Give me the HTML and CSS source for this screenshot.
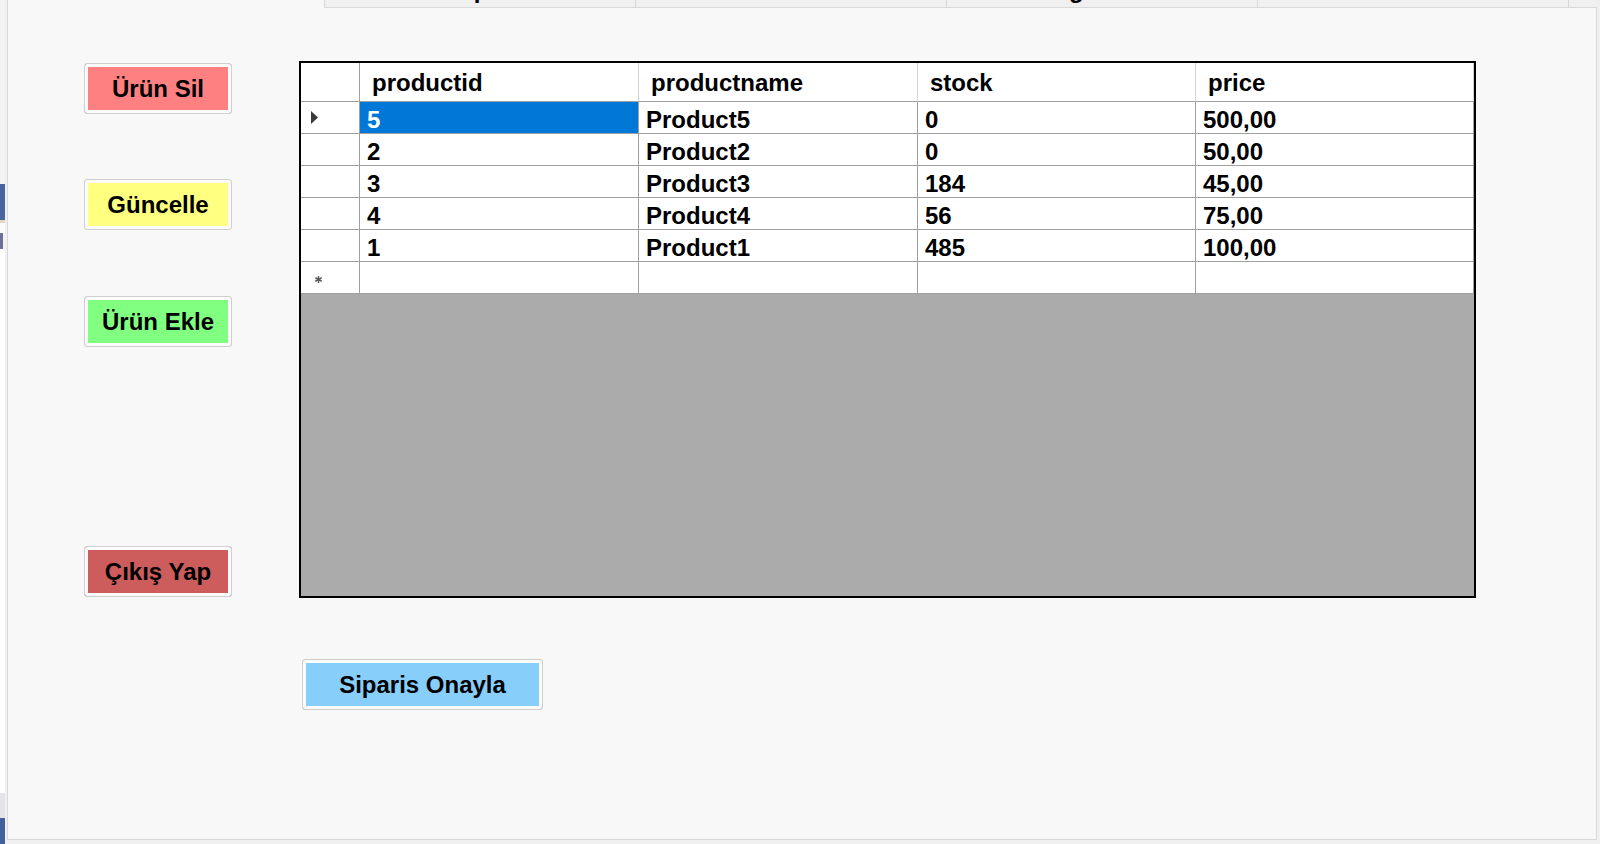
FILE: index.html
```html
<!DOCTYPE html>
<html lang="tr">
<head>
<meta charset="utf-8">
<title>Ürün Yönetimi</title>
<link rel="stylesheet" href="styles.css">
</head>
<body>
<div class="screen">
  <div class="edge">
    <div class="edge-top"></div>
    <div class="edge-blue"></div>
    <div class="edge-band"></div>
    <div class="edge-gap"></div>
    <div class="edge-mark"></div>
    <div class="edge-fill"></div>
    <div class="edge-gray"></div>
    <div class="edge-blue2"></div>
  </div>
  <div class="window">
    <div class="tabs">
      <div class="tab tab-active"></div>
      <div class="tab"><span class="tab-label tab-label-1">Siparis Listesi</span></div>
      <div class="tab"></div>
      <div class="tab"><span class="tab-label tab-label-3">Kategoriler</span></div>
      <div class="tab"></div>
      <div class="tab-rest"></div>
    </div>
    <div class="page">
      <div class="actions">
        <button class="btn btn-delete">Ürün Sil</button>
        <button class="btn btn-update">Güncelle</button>
        <button class="btn btn-add">Ürün Ekle</button>
        <button class="btn btn-exit">Çıkış Yap</button>
      </div>
      <div class="main">
        <div class="grid">
          <div class="row row-head">
            <div class="cell hcell corner"></div>
            <div class="cell hcell">productid</div>
            <div class="cell hcell">productname</div>
            <div class="cell hcell">stock</div>
            <div class="cell hcell">price</div>
          </div>
          <div class="row">
            <div class="cell rowhead"><svg class="arrow" width="7" height="13" viewBox="0 0 7 13"><polygon points="0,0 7,6.5 0,13" fill="#3a3a3a"/></svg></div>
            <div class="cell sel">5</div>
            <div class="cell">Product5</div>
            <div class="cell">0</div>
            <div class="cell">500,00</div>
          </div>
          <div class="row">
            <div class="cell rowhead"></div>
            <div class="cell">2</div>
            <div class="cell">Product2</div>
            <div class="cell">0</div>
            <div class="cell">50,00</div>
          </div>
          <div class="row">
            <div class="cell rowhead"></div>
            <div class="cell">3</div>
            <div class="cell">Product3</div>
            <div class="cell">184</div>
            <div class="cell">45,00</div>
          </div>
          <div class="row">
            <div class="cell rowhead"></div>
            <div class="cell">4</div>
            <div class="cell">Product4</div>
            <div class="cell">56</div>
            <div class="cell">75,00</div>
          </div>
          <div class="row">
            <div class="cell rowhead"></div>
            <div class="cell">1</div>
            <div class="cell">Product1</div>
            <div class="cell">485</div>
            <div class="cell">100,00</div>
          </div>
          <div class="row">
            <div class="cell rowhead newrow"><svg class="star" width="7" height="7" viewBox="0 0 7 7"><g stroke="#5a5a5a" stroke-width="1.5" stroke-linecap="round"><line x1="3.5" y1="0.5" x2="3.5" y2="6.5"/><line x1="0.8" y1="2" x2="6.2" y2="5"/><line x1="0.8" y1="5" x2="6.2" y2="2"/></g></svg></div>
            <div class="cell"></div>
            <div class="cell"></div>
            <div class="cell"></div>
            <div class="cell"></div>
          </div>
        </div>
        <button class="btn btn-confirm">Siparis Onayla</button>
      </div>
    </div>
  </div>
</div>
</body>
</html>
```
FILE: styles.css
```css
html, body {
  margin: 0;
  padding: 0;
}
body {
  background: #f0f0f0;
  font-family: "Liberation Sans", Arial, sans-serif;
  color: #000;
}
.screen {
  display: flex;
  width: 1600px;
  height: 844px;
  overflow: hidden;
}

/* left edge: part of a window behind */
.edge {
  width: 5px;
  flex: none;
  display: flex;
  flex-direction: column;
  background: #f3f3f3;
}
.edge-top { height: 184px; }
.edge-blue { height: 36px; background: #4763a0; }
.edge-band { height: 3px; background: #e2d8bc; }
.edge-gap { height: 10px; background: #fafafa; }
.edge-mark { height: 16px; width: 3px; background: #6c6f98; }
.edge-fill { flex: 1; background: #ffffff; }
.edge-gray { height: 25px; background: #e3e3e8; }
.edge-blue2 { height: 26px; background: #42609b; }

/* window */
.window {
  margin-left: 2px;
  width: 1590px;
  height: 840px;
  flex: none;
  display: flex;
  flex-direction: column;
}
.tabs {
  display: flex;
  height: 8px;
  flex: none;
}
.tab {
  width: 311px;
  flex: none;
  box-sizing: border-box;
  border-left: 1px solid #d9d9d9;
  border-bottom: 1px solid #d9d9d9;
  background: #f0f0f0;
  overflow: hidden;
}
.tab-active {
  width: 317px;
  background: #f8f8f8;
  border-bottom: none;
}
.tab-rest {
  flex: 1;
  box-sizing: border-box;
  border-left: 1px solid #d9d9d9;
  border-bottom: 1px solid #d9d9d9;
  background: #f0f0f0;
}
.tab-label {
  display: block;
  font-size: 24px;
  font-weight: bold;
  line-height: 24px;
  margin-top: -22px;
  white-space: nowrap;
}
.tab-label-1 { padding-left: 126px; }
.tab-label-3 { padding-left: 70px; }

.page {
  flex: 1;
  box-sizing: border-box;
  background: #f8f8f8;
  border: 1px solid #d9d9d9;
  border-top: none;
  display: flex;
  align-items: flex-start;
  padding: 53px 0 0 76px;
}

/* buttons */
.actions {
  width: 148px;
  flex: none;
  display: flex;
  flex-direction: column;
  gap: 65px;
  margin-top: 2px;
}
.btn {
  box-sizing: border-box;
  width: 148px;
  height: 51px;
  margin: 0;
  padding: 0;
  border: 1px solid #cfcfcf;
  border-radius: 3px;
  box-shadow: inset 0 0 0 3px #fbfbfb;
  font-family: inherit;
  font-size: 24px;
  font-weight: bold;
  color: #000;
  text-align: center;
  line-height: 1;
  -webkit-appearance: none;
  appearance: none;
}
.btn-delete { background: #ff8080; }
.btn-update { background: #ffff80; }
.btn-add { background: #80ff80; margin-top: 1px; }
.btn-exit { background: #cd5c5c; margin-top: 134px; }
.btn-confirm {
  background: #87cefa;
  width: 241px;
  margin: 61px 0 0 3px;
}

/* data grid */
.main {
  margin-left: 67px;
  display: flex;
  flex-direction: column;
  align-items: flex-start;
}
.grid {
  box-sizing: border-box;
  width: 1177px;
  height: 537px;
  border: 2px solid #000;
  background: #ababab;
}
.row {
  display: grid;
  grid-template-columns: 59px 279px 279px 278px 278px;
  height: 32px;
}
.row-head { height: 39px; }
.cell {
  box-sizing: border-box;
  background: #fff;
  border-right: 1px solid #a0a0a0;
  border-bottom: 1px solid #a0a0a0;
  font-size: 24px;
  font-weight: bold;
  line-height: 27px;
  padding: 4px 0 0 7px;
  white-space: nowrap;
  overflow: hidden;
}
.hcell {
  line-height: 36px;
  padding: 2px 0 0 12px;
  border-right-color: #d4d4d4;
}
.corner { border-right-color: #a0a0a0; }
.sel {
  background: #0078d7;
  color: #fff;
}
.rowhead {
  display: flex;
  align-items: center;
  padding: 0 0 0 10px;
}
.newrow {
  padding: 4px 0 0 14px;
}
.arrow, .star { display: block; }
```
